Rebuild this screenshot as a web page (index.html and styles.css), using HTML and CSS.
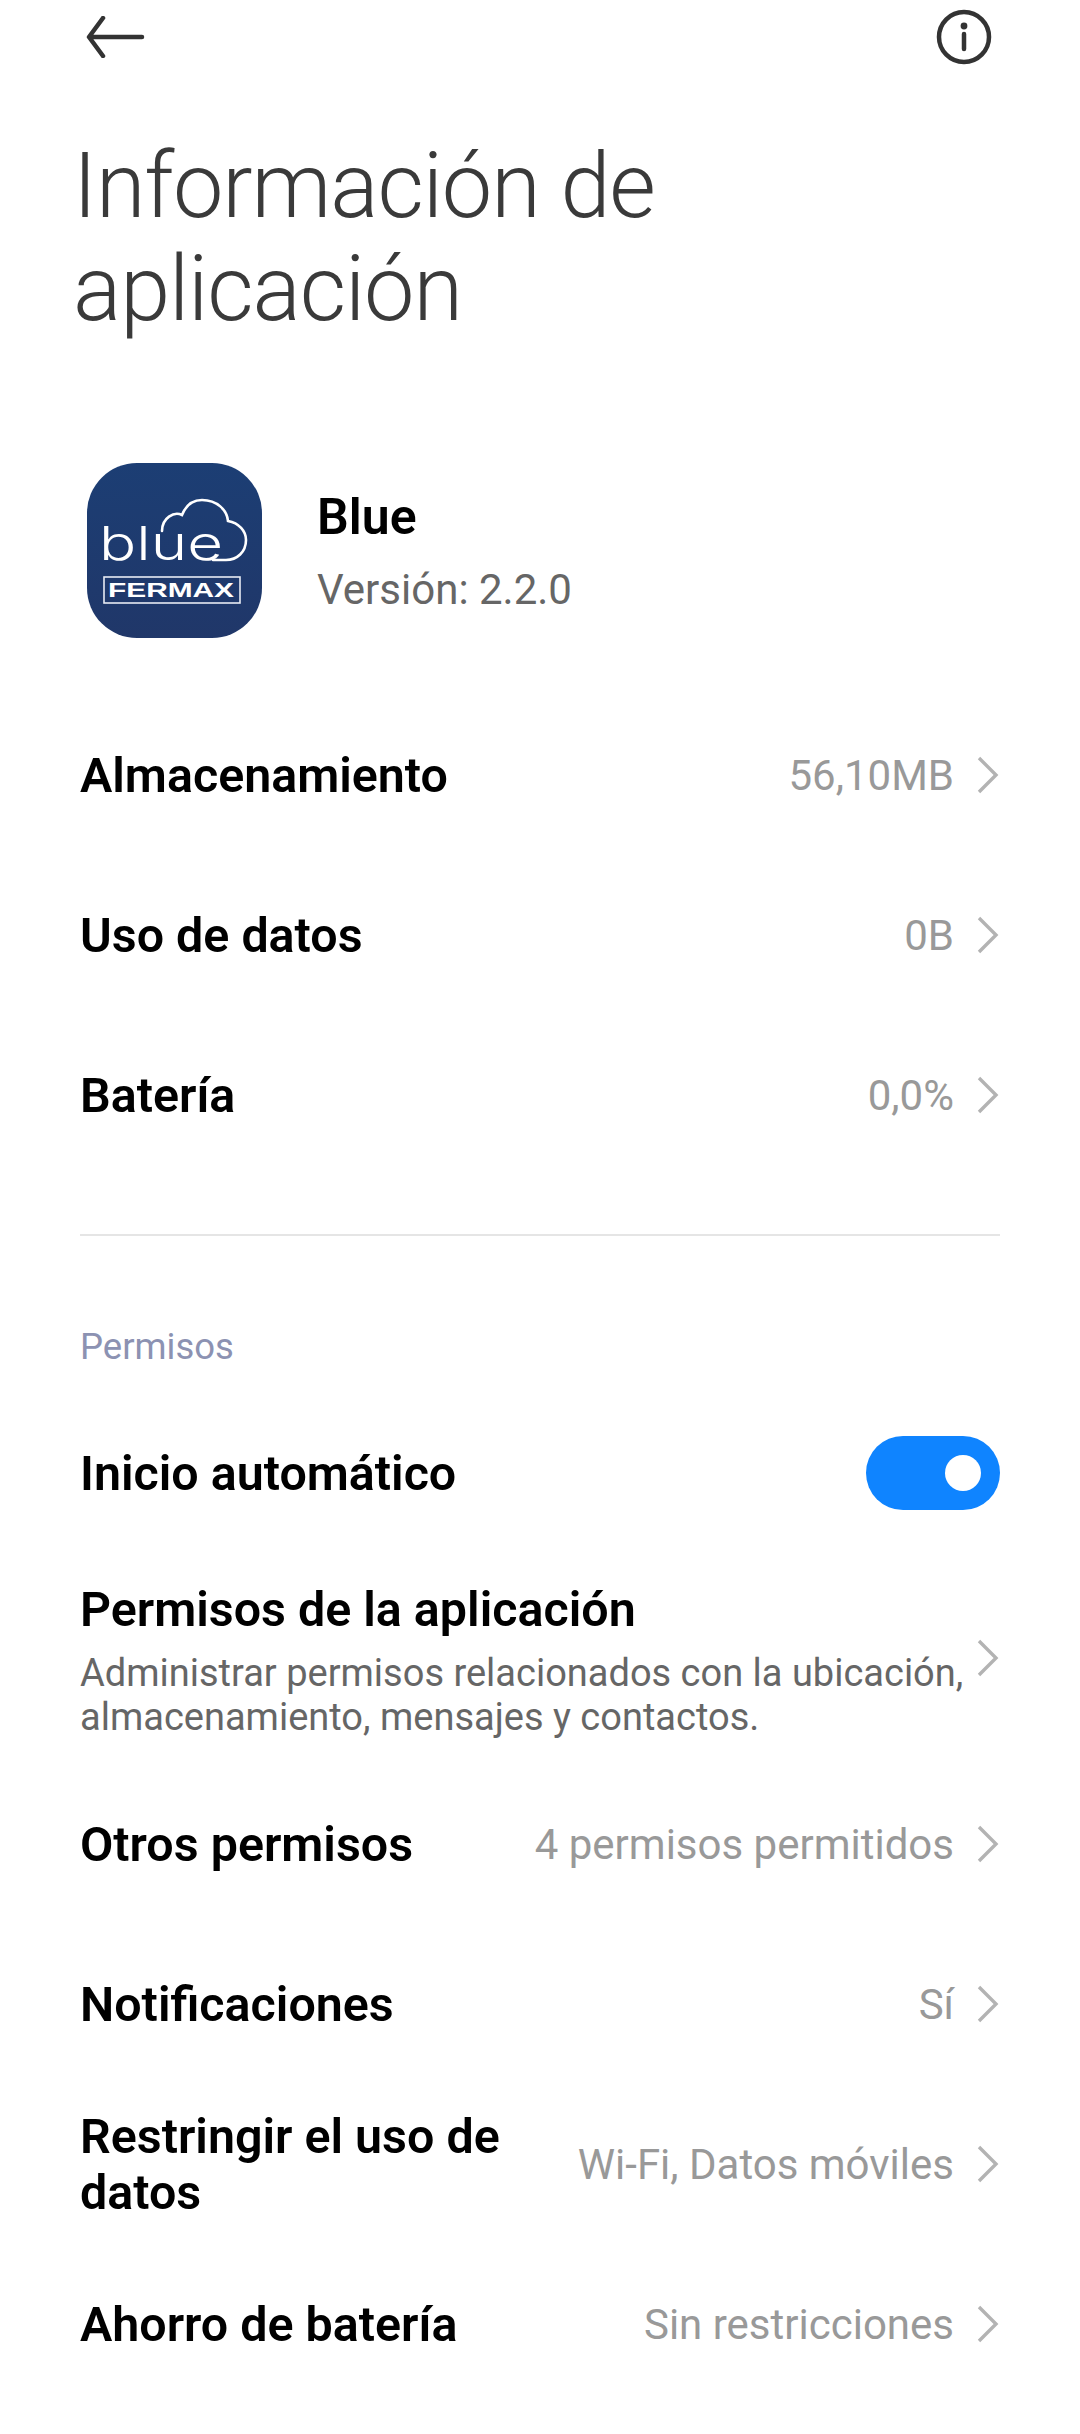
FILE: index.html
```html
<!DOCTYPE html>
<html lang="es">
<head>
    <meta charset="UTF-8">
    <meta name="viewport" content="width=device-width, initial-scale=1.0">
    <title>Información de aplicación</title>
    <link rel="stylesheet" href="styles.css">
</head>
<body>
    <div class="toolbar">
        <svg class="back-icon" width="60" height="42" viewBox="0 0 60 42">
            <path d="M56 21H4M17 2L3 21L17 40" />
        </svg>
        <svg class="info-icon" width="56" height="56" viewBox="0 0 56 56">
            <circle cx="28" cy="28" r="25" />
            <circle class="dot" cx="28" cy="17" r="3.4" />
            <path d="M28 25V40" />
        </svg>
    </div>

    <h1 class="title">Información de aplicación</h1>

    <div class="app-head">
        <svg class="app-icon" width="175" height="175" viewBox="0 0 175 175">
            <defs>
                <linearGradient id="iconBg" x1="0" y1="0" x2="0" y2="1">
                    <stop offset="0" stop-color="#1c3e74" />
                    <stop offset="1" stop-color="#203769" />
                </linearGradient>
            </defs>
            <rect width="175" height="175" rx="50" fill="url(#iconBg)" />
            <path class="cloud" d="M75 68C75 55 87 48 95 52C99 42 106 37 115 37C130 37 140 47 141 58C152 60 159 68 159 77C159 89 150 97 139 97H126" />
            <text class="logo-blue" x="12" y="97" textLength="124" lengthAdjust="spacingAndGlyphs">blue</text>
            <rect class="logo-box" x="17" y="114" width="136" height="26" />
            <text class="logo-fermax" x="21" y="134" textLength="126" lengthAdjust="spacingAndGlyphs">FERMAX</text>
        </svg>
        <div class="app-meta">
            <div class="app-name">Blue</div>
            <div class="app-version">Versión: 2.2.0</div>
        </div>
    </div>

    <div class="list list-first">
        <div class="row">
            <div class="row-label">Almacenamiento</div>
            <div class="row-value">56,10MB</div>
            <svg class="chevron" width="22" height="38" viewBox="0 0 22 38"><path d="M2 2L19 19L2 36" /></svg>
        </div>
        <div class="row">
            <div class="row-label">Uso de datos</div>
            <div class="row-value">0B</div>
            <svg class="chevron" width="22" height="38" viewBox="0 0 22 38"><path d="M2 2L19 19L2 36" /></svg>
        </div>
        <div class="row">
            <div class="row-label">Batería</div>
            <div class="row-value">0,0%</div>
            <svg class="chevron" width="22" height="38" viewBox="0 0 22 38"><path d="M2 2L19 19L2 36" /></svg>
        </div>
    </div>

    <div class="divider"></div>

    <div class="section-title">Permisos</div>

    <div class="list">
        <div class="row row-switch">
            <div class="row-label">Inicio automático</div>
            <div class="switch"><span class="knob"></span></div>
        </div>
        <div class="row row-detail">
            <div class="row-text">
                <div class="row-label">Permisos de la aplicación</div>
                <div class="row-sub">Administrar permisos relacionados con la ubicación, almacenamiento, mensajes y contactos.</div>
            </div>
            <svg class="chevron" width="22" height="38" viewBox="0 0 22 38"><path d="M2 2L19 19L2 36" /></svg>
        </div>
        <div class="row">
            <div class="row-label">Otros permisos</div>
            <div class="row-value">4 permisos permitidos</div>
            <svg class="chevron" width="22" height="38" viewBox="0 0 22 38"><path d="M2 2L19 19L2 36" /></svg>
        </div>
        <div class="row">
            <div class="row-label">Notificaciones</div>
            <div class="row-value">Sí</div>
            <svg class="chevron" width="22" height="38" viewBox="0 0 22 38"><path d="M2 2L19 19L2 36" /></svg>
        </div>
        <div class="row">
            <div class="row-label row-label-wrap">Restringir el uso de datos</div>
            <div class="row-value">Wi-Fi, Datos móviles</div>
            <svg class="chevron" width="22" height="38" viewBox="0 0 22 38"><path d="M2 2L19 19L2 36" /></svg>
        </div>
        <div class="row">
            <div class="row-label">Ahorro de batería</div>
            <div class="row-value">Sin restricciones</div>
            <svg class="chevron" width="22" height="38" viewBox="0 0 22 38"><path d="M2 2L19 19L2 36" /></svg>
        </div>
    </div>
</body>
</html>
```

FILE: styles.css
```css
html, body {
    margin: 0;
    padding: 0;
}

body {
    height: 2434px;
    overflow: hidden;
    background-color: #fff;
    font-family: Roboto, sans-serif;
    color: #000;
}

.toolbar {
    display: flex;
    justify-content: space-between;
    align-items: center;
    height: 74px;
    padding: 0 88px 0 86px;
}

.back-icon path,
.info-icon path,
.info-icon circle {
    fill: none;
    stroke: #333;
    stroke-width: 4.5;
    stroke-linecap: round;
    stroke-linejoin: round;
}

.info-icon .dot {
    fill: #333;
    stroke: none;
}

.title {
    margin: 61px 300px 0 73px;
    font-size: 90px;
    font-weight: 300;
    line-height: 103px;
    letter-spacing: -1.1px;
    color: #3a3a3a;
}

.app-head {
    display: flex;
    align-items: center;
    gap: 55px;
    margin-top: 122px;
    padding-left: 87px;
}

.app-icon {
    display: block;
}

.cloud {
    fill: none;
    stroke: #fff;
    stroke-width: 2.6;
    stroke-linecap: round;
}

.logo-blue {
    font-family: Inter, sans-serif;
    font-size: 47px;
    font-weight: 300;
    fill: #fff;
}

.logo-box {
    fill: none;
    stroke: #e8ecf4;
    stroke-width: 1.6;
}

.logo-fermax {
    font-family: "Liberation Sans", sans-serif;
    font-size: 20px;
    font-weight: bold;
    fill: #fff;
}

.app-name {
    font-size: 50px;
    font-weight: 600;
    line-height: 60px;
}

.app-version {
    margin-top: 18px;
    font-size: 42px;
    line-height: 50px;
    color: #666;
}

.list {
    padding: 0 80px;
}

.list-first {
    margin-top: 58px;
}

.row {
    display: flex;
    align-items: center;
    height: 160px;
}

.row-label {
    flex: 1;
    font-size: 48.4px;
    font-weight: 600;
    line-height: 56px;
}

.row-label-wrap {
    flex: none;
    width: 470px;
    margin-right: auto;
}

.row-value {
    margin-top: -1px;
    font-size: 42px;
    color: #999;
}

.chevron {
    flex: none;
    margin: -2px 1px 0 23px;
}

.chevron path {
    fill: none;
    stroke: #b3b3b3;
    stroke-width: 3.4;
}

.divider {
    height: 2px;
    margin: 58px 80px 0;
    background-color: #e5e5e5;
}

.section-title {
    margin: 87px 80px 0;
    font-size: 36.5px;
    line-height: 48px;
    color: #8c92b2;
}

.row-switch {
    height: 130px;
    margin-top: 38px;
}

.switch {
    display: flex;
    align-items: center;
    justify-content: flex-end;
    width: 134px;
    height: 74px;
    margin-top: -2px;
    padding-right: 19px;
    box-sizing: border-box;
    border-radius: 37px;
    background-color: #0f84ff;
}

.knob {
    width: 36px;
    height: 36px;
    border-radius: 50%;
    background-color: #fff;
}

.row-detail {
    box-sizing: border-box;
    height: 226px;
    padding-top: 17px;
}

.row-detail .chevron {
    margin-top: -5px;
    margin-left: 6px;
}

.row-text {
    flex: 1;
}

.row-sub {
    margin-top: 13px;
    font-size: 38px;
    line-height: 44px;
    color: #666;
}
```
